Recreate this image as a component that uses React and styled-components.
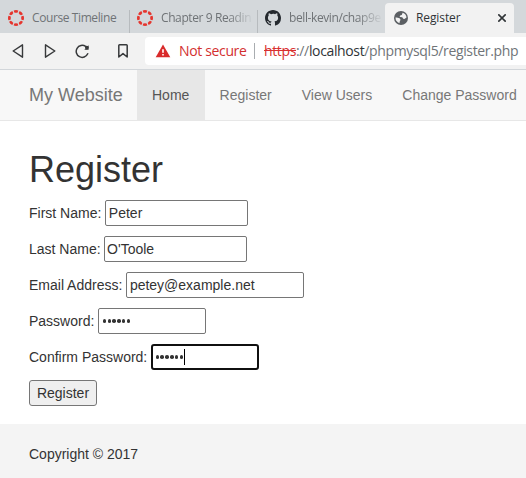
import React from 'react';
import styled, { createGlobalStyle, css } from 'styled-components';

const GlobalStyle = createGlobalStyle`
  * { box-sizing: border-box; }
  html, body { margin: 0; padding: 0; background: #fff; overflow: hidden; }
  body { font: 14px/20px "Liberation Sans", Arial, sans-serif; color: #333; }
`;

const Browser = styled.div`
  width: 526px;
  height: 478px;
  overflow: hidden;
  display: flex;
  flex-direction: column;
`;

const TabStrip = styled.div`
  display: flex;
  flex: 0 0 33px;
  padding-top: 3px;
  background: #d4d8db;
  font-family: "Open Sans", "Noto Sans", sans-serif;
  font-size: 12px;
`;

const Tab = styled.div`
  display: flex;
  align-items: center;
  flex: 0 0 ${(p) => p.$width}px;
  height: 30px;
  padding-left: ${(p) => p.$pad}px;
  color: #6f7376;
  ${(p) => p.$active && css`
    background: #f2f2f2;
    color: #303437;
    border-radius: 4px 4px 0 0;
  `}
  svg { flex: none; display: block; }
`;

const TabTitle = styled.span`
  flex: 0 0 ${(p) => p.$width}px;
  margin-left: 8px;
  white-space: nowrap;
  line-height: 20px;
  letter-spacing: ${(p) => p.$spacing || 0}px;
  ${(p) => p.$fade && css`
    mask-image: linear-gradient(to right, #000 72%, transparent 100%);
  `}
`;

const Separator = styled.span`
  flex: 0 0 1px;
  height: 23px;
  margin-top: 7px;
  background: #b7bbbe;
`;

const Toolbar = styled.div`
  display: flex;
  align-items: center;
  flex: 0 0 37px;
  padding-left: 12px;
  background: #f2f2f2;
  border-bottom: 1px solid #d2d6da;
`;

const ToolButton = styled.span`
  display: flex;
  flex: 0 0 ${(p) => p.$width}px;
  svg { display: block; }
`;

const AddressBar = styled.div`
  display: flex;
  align-items: center;
  flex: 1;
  height: 28px;
  padding-left: 10px;
  background: #fff;
  border-radius: 4px 0 0 4px;
  color: #707478;
  font-family: "Open Sans", "Noto Sans", sans-serif;
  font-size: 14px;
  white-space: nowrap;
  svg { flex: none; }
`;

const Warning = styled.span`
  flex: 0 0 83px;
  padding-left: 8px;
  color: #d32f2f;
  letter-spacing: -0.35px;
`;

const Divider = styled.span`
  flex: 0 0 1px;
  height: 16px;
  margin-right: 9px;
  background: #a9adb0;
`;

const Url = styled.span`
  letter-spacing: -0.36px;
`;

const Scheme = styled.span`
  color: #d93030;
  text-decoration: line-through;
`;

const Host = styled.span`
  color: #303437;
`;

const Navbar = styled.nav`
  display: flex;
  flex: 0 0 51px;
  padding-left: 29px;
  background: #f8f8f8;
  border-bottom: 1px solid #e7e7e7;
  line-height: 50px;
  white-space: nowrap;
`;

const Brand = styled.span`
  flex: 0 0 108px;
  color: #777;
  font-size: 18px;
`;

const NavItem = styled.span`
  padding: 0 15px;
  color: ${(p) => (p.$active ? '#555' : '#777')};
  background: ${(p) => (p.$active ? '#e7e7e7' : 'transparent')};
  ${(p) => p.$active && css`
    flex: 0 0 67.6px;
  `}
`;

const Content = styled.main`
  flex: 0 0 303px;
  padding: 29px 29px 0;
`;

const Title = styled.h1`
  margin: 0 0 10px;
  font-size: 36px;
  font-weight: 400;
  line-height: 40px;
`;

const Field = styled.label`
  display: flex;
  align-items: center;
  height: 26px;
  margin-bottom: 10px;
  white-space: pre;
`;

const Input = styled.span`
  display: flex;
  align-items: center;
  width: ${(p) => p.$width}px;
  height: 26px;
  margin-left: ${(p) => p.$gap ?? 4}px;
  padding-left: ${(p) => (p.$focused ? 1.5 : 2.5)}px;
  border: ${(p) => (p.$focused ? '2px solid #101010' : '1px solid #767676')};
  border-radius: ${(p) => (p.$focused ? 3 : 2)}px;
  background: #fff;
`;

const Dots = styled.span`
  display: flex;
  gap: 1.2px;
  padding: 0 0.5px 0 0.9px;
`;

const Dot = styled.i`
  width: 3.6px;
  height: 3.6px;
  border-radius: 50%;
  background: #333;
`;

const Caret = styled.span`
  width: 1px;
  height: 16px;
  background: #000;
`;

const Submit = styled.button`
  display: block;
  width: 68px;
  height: 26px;
  padding: 0;
  border: 1px solid #767676;
  border-radius: 3px;
  background: #efefef;
  color: #333;
  font: inherit;
`;

const Footer = styled.footer`
  flex: 1;
  padding: 20px 29px;
  background: #f4f4f4;
`;

const CanvasIcon = () => (
  <svg width="16" height="16" viewBox="0 0 16 16" fill="none">
    {Array.from({ length: 8 }, (_, i) => (
      <g key={i} transform={`rotate(${i * 45} 8 8)`}>
        <path d="M5.700 .45Q8-.45 10.300 .45L9.700 2.500Q8 3.100 6.300 2.500Z" fill="#e5352e" />
      </g>
    ))}
  </svg>
);

const GithubIcon = () => (
  <svg width="16" height="16" viewBox="0 0 16 16" fill="#24292e">
    <path d="M8 0C3.58 0 0 3.58 0 8c0 3.54 2.29 6.53 5.47 7.59.4.07.55-.17.55-.38 0-.19-.01-.82-.01-1.49-2.01.37-2.53-.49-2.69-.94-.09-.23-.48-.94-.82-1.13-.28-.15-.68-.52-.01-.53.63-.01 1.08.58 1.23.82.72 1.21 1.87.87 2.33.66.07-.52.28-.87.51-1.07-1.78-.2-3.64-.89-3.64-3.95 0-.87.31-1.59.82-2.15-.08-.2-.36-1.02.08-2.12 0 0 .67-.21 2.2.82A7.7 7.7 0 0 1 8 3.86c.68 0 1.36.09 2 .27 1.53-1.04 2.2-.82 2.2-.82.44 1.1.16 1.92.08 2.12.51.56.82 1.27.82 2.15 0 3.07-1.87 3.75-3.65 3.95.29.25.54.73.54 1.48 0 1.07-.01 1.93-.01 2.2 0 .21.15.46.55.38A8.01 8.01 0 0 0 16 8c0-4.42-3.58-8-8-8z" />
  </svg>
);

const GlobeIcon = () => (
  <svg width="14" height="14" viewBox="0 0 14 14">
    <circle cx="7" cy="7" r="7" fill="#5b5f63" />
    <path d="M1.500 6.500Q3.700 6.300 5.500 7.300Q7 8.200 6.200 9.700Q5.400 10.500 5.500 12.200Q1.500 10.900 1.500 6.500Z" fill="#f2f2f2" />
    <path d="M8.600 1.700Q12.300 2.900 12.500 6.600L10.800 7.700Q9.600 8.500 8.900 7.300L8.300 6.300 6.100 6.100Q5 5.500 6.200 4.500L7.800 4Z" fill="#f2f2f2" />
  </svg>
);

const CloseIcon = () => (
  <svg width="8" height="8" viewBox="0 0 8 8" stroke="#303437" strokeWidth="1.6">
    <path d="M.3.300l7.400 7.400M7.700.300l-7.400 7.400" />
  </svg>
);

const TriangleIcon = ({ flip }) => (
  <svg width="12" height="14" viewBox="0 0 12 14" fill="none" stroke="#37393b" strokeWidth="1.4" strokeLinejoin="round">
    <path d={flip ? 'M1.500.8v12.400L10.800 7Z' : 'M10.500.8v12.400L1.200 7Z'} />
  </svg>
);

const ReloadIcon = () => (
  <svg width="15" height="15" viewBox="0 0 15 15" fill="none" stroke="#37393b" strokeWidth="1.5" strokeLinecap="round">
    <path d="M12.700 9.800A6 6 0 1 1 10.600 2.400L12 3.600" />
    <path d="M13.600 1.200v4.500H9.300Z" fill="#37393b" stroke="none" />
    <circle cx="11.800" cy="3.600" r="1.800" fill="#37393b" stroke="none" />
  </svg>
);

const BookmarkIcon = () => (
  <svg width="10" height="14" viewBox="0 0 10 14" fill="none" stroke="#37393b" strokeWidth="1.5" strokeLinejoin="round">
    <path d="M.8 1.600Q.8.8 1.600.8H8.400Q9.200.8 9.200 1.600V13L5 9.600.8 13Z" />
  </svg>
);

const WarningIcon = () => (
  <svg width="16" height="14" viewBox="0 0 16 14">
    <path d="M8 .5 15.300 13.200H.7Z" fill="#d92b2b" />
    <path d="M7.200 5.200h1.600v3.600H7.200ZM7.200 10h1.600v1.600H7.200Z" fill="#fff" />
  </svg>
);

const PasswordDots = () => (
  <Dots>
    {Array.from({ length: 6 }, (_, i) => <Dot key={i} />)}
  </Dots>
);

export default function App() {
  return (
    <Browser>
      <GlobalStyle />
      <TabStrip>
        <Tab $width={129} $pad={8}>
          <CanvasIcon />
          <TabTitle $width={92} $spacing={-0.4}>Course Timeline</TabTitle>
        </Tab>
        <Separator />
        <Tab $width={127} $pad={7}>
          <CanvasIcon />
          <TabTitle $width={93} $spacing={-0.4} $fade>Chapter 9 Readin</TabTitle>
        </Tab>
        <Separator />
        <Tab $width={127} $pad={7}>
          <GithubIcon />
          <TabTitle $width={94} $spacing={-0.4} $fade>bell-kevin/chap9e</TabTitle>
        </Tab>
        <Tab $width={129} $pad={9} $active>
          <GlobeIcon />
          <TabTitle $width={82} $spacing={-0.1}>Register</TabTitle>
          <CloseIcon />
        </Tab>
      </TabStrip>
      <Toolbar>
        <ToolButton $width={32}><TriangleIcon /></ToolButton>
        <ToolButton $width={31}><TriangleIcon flip /></ToolButton>
        <ToolButton $width={43}><ReloadIcon /></ToolButton>
        <ToolButton $width={27}><BookmarkIcon /></ToolButton>
        <AddressBar>
          <WarningIcon />
          <Warning>Not secure</Warning>
          <Divider />
          <Url><Scheme>https</Scheme>://<Host>localhost</Host>/phpmysql5/register.php</Url>
        </AddressBar>
      </Toolbar>
      <Navbar>
        <Brand>My Website</Brand>
        <NavItem $active>Home</NavItem>
        <NavItem>Register</NavItem>
        <NavItem>View Users</NavItem>
        <NavItem>Change Password</NavItem>
      </Navbar>
      <Content>
        <Title>Register</Title>
        <Field>First Name:<Input $width={143}>Peter</Input></Field>
        <Field>Last Name:<Input $width={143} $gap={3}>O'Toole</Input></Field>
        <Field>Email Address:<Input $width={178}>petey@example.net</Input></Field>
        <Field>Password:<Input $width={108}><PasswordDots /></Input></Field>
        <Field>Confirm Password:<Input $width={108} $focused><PasswordDots /><Caret /></Input></Field>
        <Submit type="button">Register</Submit>
      </Content>
      <Footer>Copyright © 2017</Footer>
    </Browser>
  );
}
